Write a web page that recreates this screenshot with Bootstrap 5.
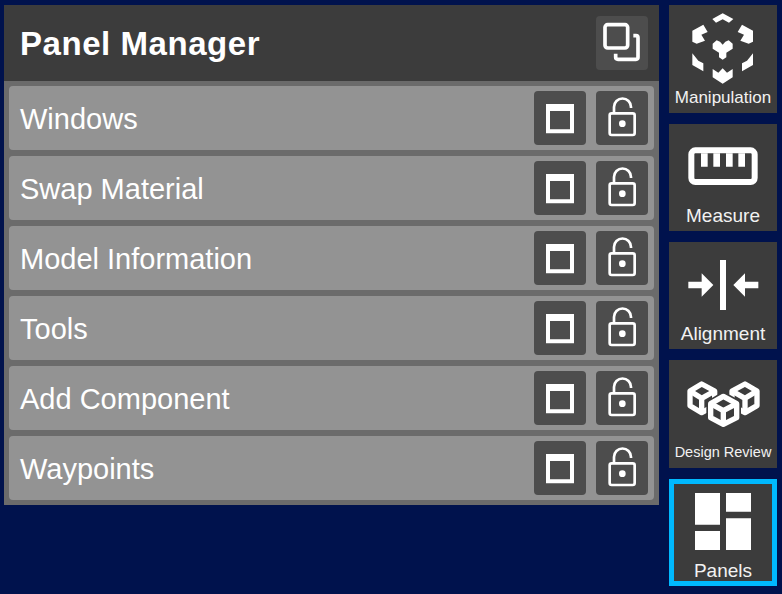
<!DOCTYPE html>
<html lang="en">
<head>
<meta charset="UTF-8">
<meta name="viewport" content="width=device-width, initial-scale=1.0">
<title>Panel Manager</title>
<link href="https://cdn.jsdelivr.net/npm/bootstrap@5.3.0/dist/css/bootstrap.min.css" rel="stylesheet">
<style>
body { background: #00124d; font-family: "Liberation Sans", Arial, sans-serif; color: #fff; overflow: hidden; }
.stage { width: 782px; height: 594px; padding: 5px 5px 0 4px; gap: 10px; }
.pm-panel { width: 655px; height: 500px; background: #6b6b6b; }
.pm-head { height: 76px; background: #3c3c3c; padding: 0 11px 0 16px; }
.pm-title { font-size: 33px; font-weight: 700; letter-spacing: .55px; margin: 0; line-height: 1; }
.pm-list { padding: 5px; gap: 6px; }
.pm-row { height: 64px; background: #939393; border-radius: 4px; padding: 0 6px 0 11px; gap: 10px; }
.pm-name { font-size: 29px; line-height: 1; color: #fff; padding-top: 2px; }
.pm-btn { width: 52px; height: 54px; background: #4d4d4d; border: 0; border-radius: 4px; padding: 0; }
.pm-btn svg { display: block; width: 52px; height: 54px; }
.rail { width: 108px; height: 581px; gap: 11px; margin-top: .2px; }
.tile { flex: 1 1 0; background: #3c3c3c; position: relative; }
.tile svg { display: block; width: 108px; height: 83px; }
.tile-on { outline: 5px solid #00b9ff; outline-offset: -5px; }
.tile-label { font-size: 19px; line-height: 20px; color: #f2f2f2; text-align: center; white-space: nowrap; margin-top: -1px; }
.label-sm { font-size: 17px; margin-top: 0; }
.label-xs { font-size: 14.5px; }
</style>
</head>
<body>
<svg width="0" height="0" class="position-absolute">
  <symbol id="i-window" viewBox="27 18 156 162">
    <path fill="#fff" fill-rule="evenodd" d="M63 57H147V145H63ZM75 78V133H135V78Z"/>
  </symbol>
  <symbol id="i-lock" viewBox="213 18 156 162">
    <rect x="254" y="85" width="75" height="65" rx="6" fill="none" stroke="#fff" stroke-width="8"/>
    <path d="M267 85V66A25.500 25.500 0 0 1 318 66V69" fill="none" stroke="#fff" stroke-width="8"/>
    <circle cx="292" cy="116" r="10" fill="#fff"/>
  </symbol>
</svg>
<div class="stage d-flex align-items-start">
  <div class="pm-panel d-flex flex-column">
    <div class="pm-head d-flex align-items-center justify-content-between">
      <h1 class="pm-title">Panel Manager</h1>
      <button class="pm-btn" type="button">
        <svg viewBox="228 48 156 162" fill="none" stroke="#fff" stroke-width="11">
          <rect x="255" y="74" width="68" height="70" rx="8"/>
          <path d="M340 107H348Q354 107 354 113V172Q354 178 348 178H294Q287 178 287 172V161"/>
        </svg>
      </button>
    </div>
    <div class="pm-list d-flex flex-column">
      <div class="pm-row d-flex align-items-center"><span class="pm-name me-auto">Windows</span><button class="pm-btn" type="button"><svg><use href="#i-window"/></svg></button><button class="pm-btn" type="button"><svg><use href="#i-lock"/></svg></button></div>
      <div class="pm-row d-flex align-items-center"><span class="pm-name me-auto">Swap Material</span><button class="pm-btn" type="button"><svg><use href="#i-window"/></svg></button><button class="pm-btn" type="button"><svg><use href="#i-lock"/></svg></button></div>
      <div class="pm-row d-flex align-items-center"><span class="pm-name me-auto">Model Information</span><button class="pm-btn" type="button"><svg><use href="#i-window"/></svg></button><button class="pm-btn" type="button"><svg><use href="#i-lock"/></svg></button></div>
      <div class="pm-row d-flex align-items-center"><span class="pm-name me-auto">Tools</span><button class="pm-btn" type="button"><svg><use href="#i-window"/></svg></button><button class="pm-btn" type="button"><svg><use href="#i-lock"/></svg></button></div>
      <div class="pm-row d-flex align-items-center"><span class="pm-name me-auto">Add Component</span><button class="pm-btn" type="button"><svg><use href="#i-window"/></svg></button><button class="pm-btn" type="button"><svg><use href="#i-lock"/></svg></button></div>
      <div class="pm-row d-flex align-items-center"><span class="pm-name me-auto">Waypoints</span><button class="pm-btn" type="button"><svg><use href="#i-window"/></svg></button><button class="pm-btn" type="button"><svg><use href="#i-lock"/></svg></button></div>
    </div>
  </div>
  <div class="rail d-flex flex-column">
    <div class="tile">
      <svg viewBox="27 15 324 249" fill="#fff">
        <path d="M188 40L220 57L207 68L188 58L168 68L157 57Z"/>
        <path d="M97 92L130 74L143 96L124 104L135 122L110 131L97 125Z"/>
        <path d="M279 92L246 74L233 96L252 104L241 122L266 131L279 125Z"/>
        <path d="M97 160L115 182L130 190V214L97 195Z"/>
        <path d="M279 160L261 182L246 190V214L279 195Z"/>
        <path d="M188 251L158 232V207L175 218L188 205L201 218L218 207V232Z"/>
        <path d="M158 131L170 121L180 125L188 134L196 125L206 121L218 131V146L199 158V172L188 179L177 172V158L158 146Z"/>
      </svg>
      <div class="tile-label label-sm">Manipulation</div>
    </div>
    <div class="tile">
      <svg viewBox="27 12 324 249">
        <rect x="94" y="91" width="190" height="95" rx="12" fill="none" stroke="#fff" stroke-width="18"/>
        <path fill="#fff" d="M123 100H143V140H123ZM160 100H180V140H160ZM198 100H218V140H198ZM235 100H255V140H235Z"/>
      </svg>
      <div class="tile-label">Measure</div>
    </div>
    <div class="tile">
      <svg viewBox="27 6 324 249" fill="#fff">
        <path d="M180 60H198V210H180Z"/>
        <path d="M85 125H125V100L160 135L125 170V145H85Z"/>
        <path d="M295 125H255V100L220 135L255 170V145H295Z"/>
      </svg>
      <div class="tile-label">Alignment</div>
    </div>
    <div class="tile">
      <svg viewBox="27 15 324 249" fill="none" stroke="#fff" stroke-width="16" stroke-linejoin="round">
        <path d="M125 87L164 108V152L125 173L90 152V108Z"/>
        <path d="M90 108L125 130L164 108M125 130V173"/>
        <path d="M255 87L291 108V152L255 173L216 152V108Z"/>
        <path d="M216 108L255 130L291 108M255 130V173"/>
        <path d="M190 124L230 146V188L190 208L152 188V146Z" fill="#3c3c3c" stroke="#3c3c3c" stroke-width="26"/>
        <path d="M190 124L230 146V188L190 208L152 188V146Z"/>
        <path d="M152 146L190 167L230 146M190 167V208"/>
      </svg>
      <div class="tile-label label-xs">Design Review</div>
    </div>
    <div class="tile tile-on">
      <svg viewBox="27 15 324 249" fill="#fff">
        <path d="M105 57H180V152H105ZM198 57H273V113H198ZM105 171H180V228H105ZM198 133H273V228H198Z"/>
      </svg>
      <div class="tile-label">Panels</div>
    </div>
  </div>
</div>
<script src="https://cdn.jsdelivr.net/npm/bootstrap@5.3.0/dist/js/bootstrap.bundle.min.js"></script>
</body>
</html>
